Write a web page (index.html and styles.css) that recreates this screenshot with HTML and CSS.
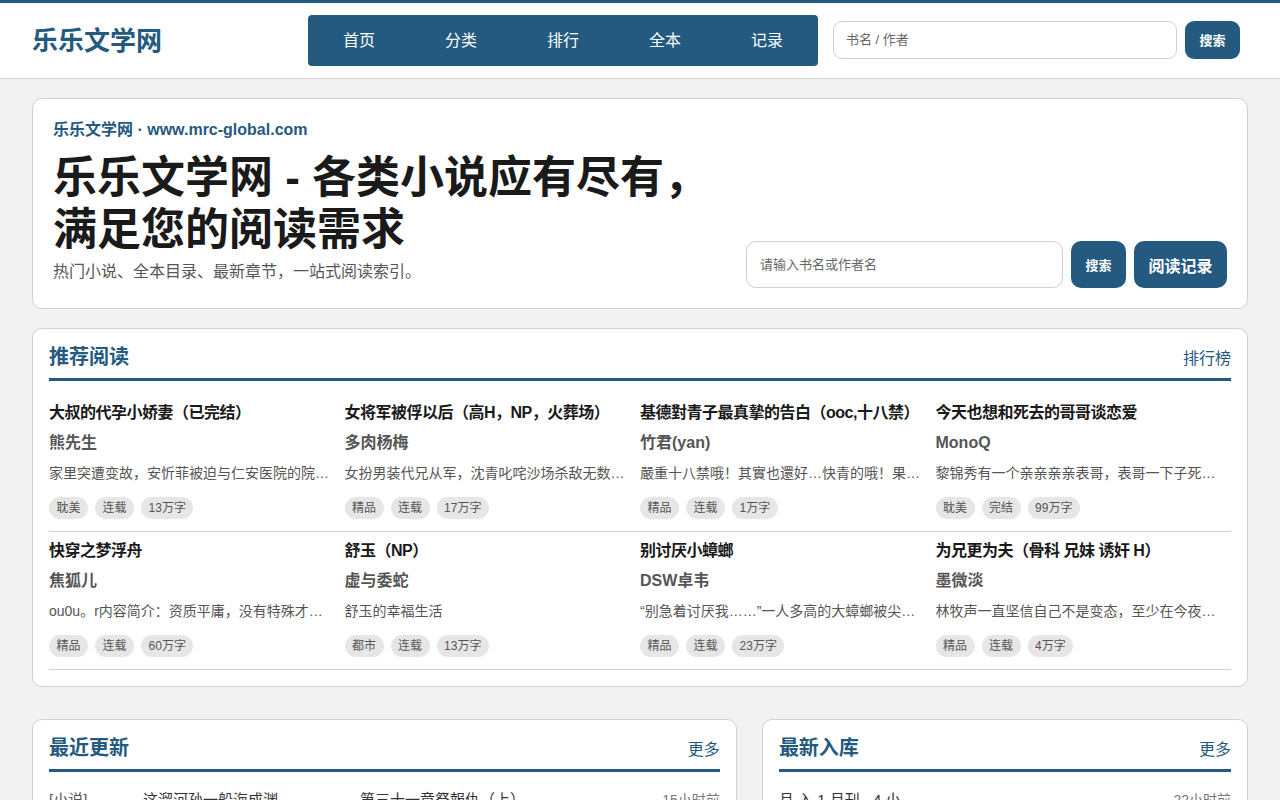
FILE: index.html
```html
<!DOCTYPE html>
<html lang="zh-CN">
<head>
<meta charset="utf-8">
<title>乐乐文学网</title>
<link rel="stylesheet" href="styles.css">
</head>
<body>
<header class="site-header">
  <a class="logo" href="#">乐乐文学网</a>
  <nav class="main-nav">
    <a href="#">首页</a>
    <a href="#">分类</a>
    <a href="#">排行</a>
    <a href="#">全本</a>
    <a href="#">记录</a>
  </nav>
  <form class="header-search">
    <input class="header-input" type="text" placeholder="书名 / 作者">
    <button class="btn btn-sm" type="button">搜索</button>
  </form>
</header>

<main class="main">
  <section class="hero card">
    <div class="hero-text">
      <div class="hero-kicker">乐乐文学网 · www.mrc-global.com</div>
      <h1 class="hero-title">乐乐文学网 - 各类小说应有尽有，<br>满足您的阅读需求</h1>
      <p class="hero-sub">热门小说、全本目录、最新章节，一站式阅读索引。</p>
    </div>
    <form class="hero-form">
      <input class="hero-input" type="text" placeholder="请输入书名或作者名">
      <button class="btn btn-sm btn-tall" type="button">搜索</button>
      <button class="btn btn-lg btn-tall" type="button">阅读记录</button>
    </form>
  </section>

  <section class="card panel rec">
    <div class="panel-head">
      <h2 class="panel-title">推荐阅读</h2>
      <a class="panel-more" href="#">排行榜</a>
    </div>
    <div class="book-row">
      <div class="book">
        <div class="book-title">大叔的代孕小娇妻（已完结）</div>
        <div class="book-author">熊先生</div>
        <div class="book-desc">家里突遭变故，安忻菲被迫与仁安医院的院长签下代孕协议</div>
        <div class="tags"><span class="tag">耽美</span><span class="tag">连载</span><span class="tag">13万字</span></div>
      </div>
      <div class="book">
        <div class="book-title">女将军被俘以后（高H，NP，火葬场）</div>
        <div class="book-author">多肉杨梅</div>
        <div class="book-desc">女扮男装代兄从军，沈青叱咤沙场杀敌无数，却不料</div>
        <div class="tags"><span class="tag">精品</span><span class="tag">连载</span><span class="tag">17万字</span></div>
      </div>
      <div class="book">
        <div class="book-title">基德對青子最真摯的告白（ooc,十八禁）</div>
        <div class="book-author">竹君(yan)</div>
        <div class="book-desc">嚴重十八禁哦！其實也還好…快青的哦！果然還是</div>
        <div class="tags"><span class="tag">精品</span><span class="tag">连载</span><span class="tag">1万字</span></div>
      </div>
      <div class="book">
        <div class="book-title">今天也想和死去的哥哥谈恋爱</div>
        <div class="book-author">MonoQ</div>
        <div class="book-desc">黎锦秀有一个亲亲亲亲表哥，表哥一下子死了，他</div>
        <div class="tags"><span class="tag">耽美</span><span class="tag">完结</span><span class="tag">99万字</span></div>
      </div>
    </div>
    <div class="book-row">
      <div class="book">
        <div class="book-title">快穿之梦浮舟</div>
        <div class="book-author">焦狐儿</div>
        <div class="book-desc">ou0u。r内容简介：资质平庸，没有特殊才能的女主角</div>
        <div class="tags"><span class="tag">精品</span><span class="tag">连载</span><span class="tag">60万字</span></div>
      </div>
      <div class="book">
        <div class="book-title">舒玉（NP）</div>
        <div class="book-author">虚与委蛇</div>
        <div class="book-desc">舒玉的幸福生活</div>
        <div class="tags"><span class="tag">都市</span><span class="tag">连载</span><span class="tag">13万字</span></div>
      </div>
      <div class="book">
        <div class="book-title">别讨厌小蟑螂</div>
        <div class="book-author">DSW卓韦</div>
        <div class="book-desc">“别急着讨厌我……”一人多高的大蟑螂被尖叫声吓到</div>
        <div class="tags"><span class="tag">精品</span><span class="tag">连载</span><span class="tag">23万字</span></div>
      </div>
      <div class="book">
        <div class="book-title">为兄更为夫（骨科 兄妹 诱奸 H）</div>
        <div class="book-author">墨微淡</div>
        <div class="book-desc">林牧声一直坚信自己不是变态，至少在今夜之前是这样</div>
        <div class="tags"><span class="tag">精品</span><span class="tag">连载</span><span class="tag">4万字</span></div>
      </div>
    </div>
  </section>

  <div class="bottom-grid">
    <section class="card panel">
      <div class="panel-head">
        <h2 class="panel-title">最近更新</h2>
        <a class="panel-more" href="#">更多</a>
      </div>
      <ul class="list">
        <li class="list-row upd"><span class="cat">[小说]</span><span class="name">这溜河孙一船海成渊</span><span class="chap">第三十一章祭報仇（上）</span><span class="time">15小时前</span></li>
        <li class="list-row upd"><span class="cat">[小说]</span><span class="name">快穿之梦浮舟</span><span class="chap">第一百二十章</span><span class="time">16小时前</span></li>
      </ul>
    </section>
    <section class="card panel">
      <div class="panel-head">
        <h2 class="panel-title">最新入库</h2>
        <a class="panel-more" href="#">更多</a>
      </div>
      <ul class="list">
        <li class="list-row new"><span class="name">旦 入 1 月刊 · 4 小</span><span class="time">22小时前</span></li>
        <li class="list-row new"><span class="name">舒玉（NP）</span><span class="time">23小时前</span></li>
      </ul>
    </section>
  </div>
</main>
</body>
</html>
```

FILE: styles.css
```css
* { box-sizing: border-box; }

html, body { margin: 0; padding: 0; }

body {
  background: #f2f2f2;
  font-family: "Liberation Sans", "Noto Sans CJK SC", sans-serif;
  color: #222;
  border-top: 3px solid #245a80;
}

a { text-decoration: none; color: inherit; }

/* header */
.site-header {
  height: 76px;
  background: #fff;
  border-bottom: 1px solid #d6d6d6;
  display: flex;
  align-items: center;
  padding: 0 40px 0 32px;
}

.logo {
  width: 276px;
  font-size: 26px;
  font-weight: bold;
  color: #245a80;
  flex-shrink: 0;
  padding-bottom: 4px;
}

.main-nav {
  width: 510px;
  height: 51px;
  background: #245a80;
  border-radius: 4px;
  display: flex;
  flex-shrink: 0;
}

.main-nav a {
  flex: 1;
  display: flex;
  align-items: center;
  justify-content: center;
  color: #fff;
  font-size: 16px;
  padding-bottom: 4px;
}

.header-search {
  flex: 1;
  display: flex;
  gap: 8px;
  margin-left: 15px;
  margin-bottom: 2px;
}

.header-input {
  flex: 1;
  height: 38px;
  border: 1px solid #cfcfcf;
  border-radius: 9px;
  padding: 0 12px;
  font-size: 13px;
  font-family: inherit;
  color: #333;
}

.header-input::placeholder, .hero-input::placeholder { color: #666; }

.btn {
  background: #245a80;
  color: #fff;
  border: none;
  border-radius: 9px;
  font-family: inherit;
  font-weight: bold;
  padding: 0;
}

.btn-sm { width: 55px; height: 38px; font-size: 13px; }
.btn-lg { width: 93px; font-size: 16px; }
.btn-tall { height: 47px; border-radius: 10px; }

/* main */
.main {
  padding: 19px 32px 0;
}

.card {
  background: #fff;
  border: 1px solid #d0d0d0;
  border-radius: 10px;
}

.hero {
  display: flex;
  align-items: flex-end;
  justify-content: space-between;
  padding: 20px;
}

.hero-kicker {
  font-size: 16px;
  line-height: 22px;
  font-weight: bold;
  color: #245a80;
}

.hero-title {
  margin: 11px 0 0;
  font-size: 44px;
  line-height: 52px;
  font-weight: bold;
  color: #1a1a1a;
}

.hero-sub {
  margin: 5px 0 5px;
  font-size: 16px;
  line-height: 22px;
  color: #555;
}

.hero-form {
  width: 481px;
  display: flex;
  gap: 8px;
}

.hero-input {
  flex: 1;
  height: 47px;
  border: 1px solid #cfcfcf;
  border-radius: 10px;
  padding: 0 13px;
  font-size: 13px;
  font-family: inherit;
}

/* panels */
.panel {
  padding: 16px 16px 16px;
}

.rec { margin-top: 19px; }

.panel-head {
  display: flex;
  align-items: center;
  justify-content: space-between;
  padding-bottom: 9px;
  border-bottom: 3px solid #245a80;
}

.panel-title {
  margin: 0;
  font-size: 20px;
  line-height: 24px;
  font-weight: bold;
  color: #245a80;
}

.panel-more {
  font-size: 16px;
  color: #245a80;
}

.book-row {
  display: grid;
  grid-template-columns: repeat(4, 1fr);
  border-bottom: 1px solid #cfcfcf;
  padding: 7px 0 12px;
}

.panel-head + .book-row { margin-top: 13px; }

.book {
  min-width: 0;
  padding-right: 8px;
}

.book-title, .book-author, .book-desc {
  white-space: nowrap;
  overflow: hidden;
  text-overflow: ellipsis;
  line-height: 24px;
}

.book-title {
  font-size: 16px;
  font-weight: bold;
  color: #1a1a1a;
  letter-spacing: -0.5px;
}

.book-author {
  margin-top: 6px;
  font-size: 16px;
  font-weight: bold;
  color: #555;
}

.book-desc {
  margin-top: 6px;
  font-size: 14px;
  color: #555;
}

.tags {
  margin-top: 12px;
  display: flex;
  gap: 7px;
}

.tag {
  height: 22px;
  line-height: 22px;
  padding: 0 7.5px;
  border-radius: 11px;
  background: #e6e6e6;
  color: #555;
  font-size: 12px;
}

/* bottom */
.bottom-grid {
  margin-top: 32px;
  display: grid;
  grid-template-columns: 1.45fr 1fr;
  gap: 25px;
}

.list {
  list-style: none;
  margin: 0;
  padding: 14px 0 0;
}

.list-row {
  display: flex;
  align-items: center;
  font-size: 15px;
  line-height: 28px;
  color: #333;
  border-bottom: 1px dashed #ddd;
}

.cat { width: 94px; color: #555; }
.upd .name { width: 217px; }
.upd .chap { flex: 1; }
.new .name { flex: 1; }
.time { color: #777; font-size: 14px; margin-left: auto; }
```
